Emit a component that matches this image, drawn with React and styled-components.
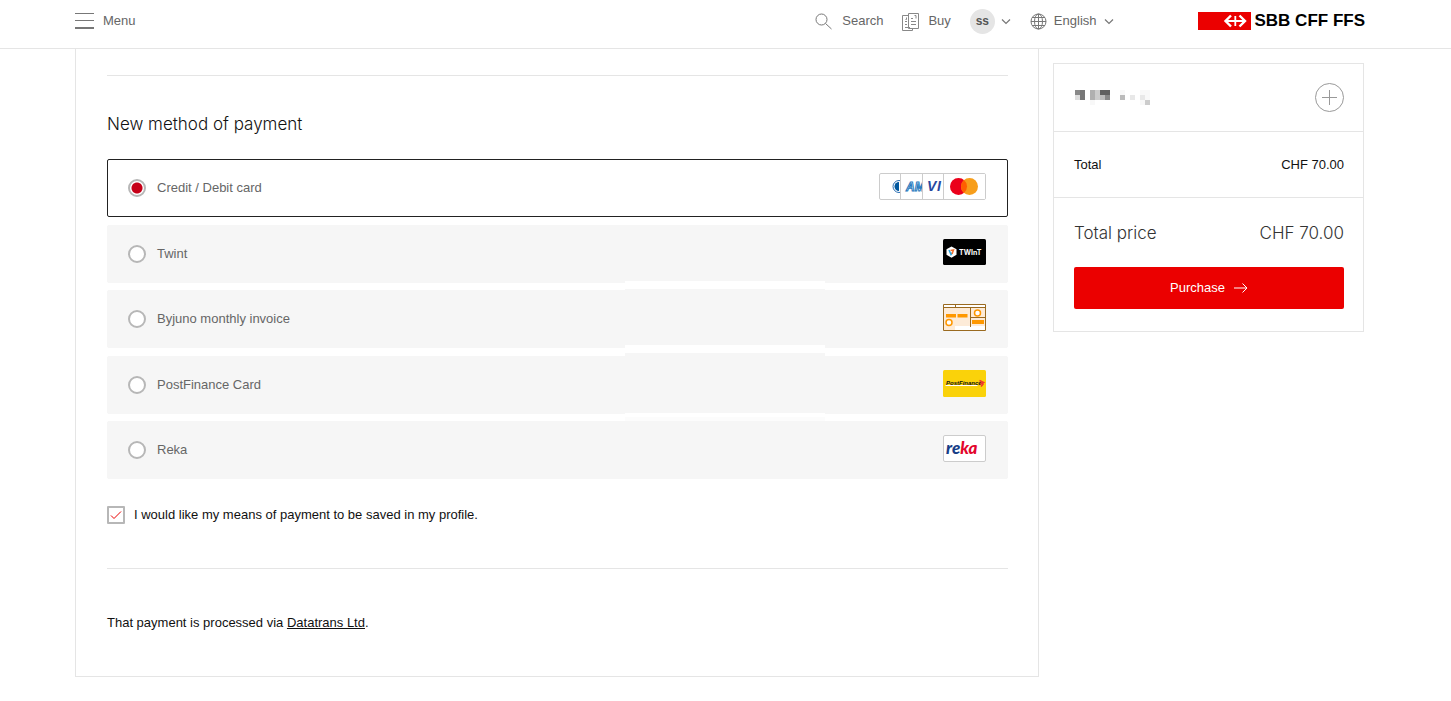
import React, { useState } from 'react';
import styled, { createGlobalStyle } from 'styled-components';

const GlobalStyle = createGlobalStyle`
  * {
    box-sizing: border-box;
  }

  body {
    margin: 0;
    background: #fff;
    color: #111;
    font-family: "Liberation Sans", Arial, sans-serif;
    font-size: 13px;
    line-height: 20px;
  }

  button {
    font: inherit;
    color: inherit;
    border: none;
    background: none;
    padding: 0;
    cursor: pointer;
  }

  svg {
    display: block;
    flex-shrink: 0;
  }
`;

const Header = styled.header`
  display: flex;
  align-items: center;
  justify-content: space-between;
  height: 49px;
  padding: 0 86px 6px 75px;
  border-bottom: 1px solid #e5e5e5;
  color: #666;
`;

const NavButton = styled.button`
  display: flex;
  align-items: center;
  gap: ${props => props.$gap || 9}px;
`;

const HeaderRight = styled.div`
  display: flex;
  align-items: center;
`;

const Nav = styled.nav`
  display: flex;
  align-items: center;
  gap: 19px;
  margin-right: 84px;
`;

const Avatar = styled.span`
  width: 25px;
  height: 25px;
  border-radius: 50%;
  background: #e5e5e5;
  color: #555;
  font-size: 12px;
  font-weight: bold;
  line-height: 25px;
  text-align: center;
`;

const Logo = styled.a`
  display: flex;
  align-items: center;
  gap: 4px;
  color: #000;
  font-size: 17px;
  font-weight: bold;
  text-decoration: none;
  white-space: nowrap;
`;

const Page = styled.div`
  display: flex;
  align-items: flex-start;
  gap: 14px;
  padding: 0 87px 24px 75px;
`;

const Content = styled.main`
  flex: 1;
  min-width: 0;
  padding: 26px 30px 43px 31px;
  border: 1px solid #e5e5e5;
  border-width: 0 1px 1px;
`;

const Divider = styled.hr`
  margin: 0;
  border: 0;
  border-top: 1px solid #e5e5e5;
`;

const Title = styled.h2`
  margin: 36px 0 23px;
  font-family: Inter, "Liberation Sans", sans-serif;
  font-size: 17px;
  font-weight: 300;
  line-height: 24px;
`;

const Methods = styled.div`
  display: flex;
  flex-direction: column;
  justify-content: space-between;
  min-height: 320px;
`;

const Method = styled.label`
  position: relative;
  display: flex;
  align-items: center;
  gap: 11px;
  height: 58px;
  padding: 0 21px 0 20px;
  border: 1px solid ${props => (props.$active ? '#222' : '#f6f6f6')};
  border-radius: 2px;
  background: ${props => (props.$active ? '#fff' : '#f6f6f6')};
  color: #666;
  cursor: pointer;
`;

// white strip lying over the gap under a row
const Strip = styled.span`
  position: absolute;
  z-index: 1;
  top: ${props => props.$top}px;
  left: 57.5%;
  width: 22.3%;
  height: ${props => props.$height}px;
  background: #fff;
  box-shadow: 0 ${props => props.$edge}px ${props => props.$color || '#f6f6f6'};
  pointer-events: none;
`;

const Radio = styled.input`
  appearance: none;
  width: 18px;
  height: 18px;
  margin: 0;
  border: 2px solid #b7b7b7;
  border-radius: 50%;
  background: #fff;

  &:checked {
    background: radial-gradient(circle, #c60018 5px, #fff 6px);
  }
`;

const MethodName = styled.span`
  flex: 1;
`;

const MethodLogo = styled.span`
  padding-bottom: 3px;
`;

const SaveRow = styled.div`
  display: flex;
  align-items: center;
  gap: 9px;
  margin: 26px 0 43px;
`;

const CheckBox = styled.span`
  display: grid;
  width: 18px;
  height: 18px;

  input, svg {
    grid-area: 1 / 1;
  }

  input {
    appearance: none;
    width: 18px;
    height: 18px;
    margin: 0;
    border: 2px solid #b7b7b7;
    border-radius: 1px;
    cursor: pointer;
  }

  svg {
    pointer-events: none;
  }

  input:not(:checked) + svg {
    visibility: hidden;
  }
`;

const Note = styled.p`
  margin: 44px 0 0;

  a {
    color: inherit;
  }
`;

const Summary = styled.aside`
  width: 311px;
  margin-top: 14px;
  border: 1px solid #e5e5e5;
`;

const SummaryRow = styled.div`
  display: flex;
  align-items: center;
  justify-content: space-between;
  height: ${props => props.$height}px;
  padding: 0 19px 0 20px;
  border-bottom: 1px solid #e5e5e5;
`;

const Checkout = styled.div`
  padding: 22px 19px 22px 20px;
`;

const Price = styled.div`
  display: flex;
  justify-content: space-between;
  margin-bottom: 21px;
  color: #333;
  font-family: Inter, "Liberation Sans", sans-serif;
  font-size: 17px;
  font-weight: 300;
  line-height: 26px;
`;

const Purchase = styled.button`
  display: flex;
  align-items: center;
  justify-content: center;
  gap: 9px;
  width: 100%;
  height: 42px;
  border-radius: 2px;
  background: #eb0000;
  color: #fff;
`;

const MenuIcon = () => (
  <svg width="19" height="18" fill="none" stroke="#777">
    <path d="M0 1.5h19M0 8.5h19" />
    <path d="M0 16h19" strokeWidth="2" />
  </svg>
);

const SearchIcon = () => (
  <svg width="18" height="18" fill="none" stroke="#777">
    <circle cx="6.5" cy="7.5" r="5.5" />
    <path d="M10.5 11.5l6 5.5" />
  </svg>
);

const BuyIcon = () => (
  <svg width="17" height="19" fill="none" stroke="#888">
    <path d="M6.5 3.5h-6v15h10v-2M6.5 1.5h10v15h-10z" />
    <path d="M9 6.5h2M12.5 3.5H14v3M9 9.5h5M9 12.5h5M3 9.5h2M3 12.5h2M3 15.5h5M4.5 5.5v2h-1" />
  </svg>
);

const GlobeIcon = () => (
  <svg width="17" height="17" fill="none" stroke="#777">
    <circle cx="8.5" cy="8.5" r="7.5" />
    <ellipse cx="8.5" cy="8.5" rx="4" ry="7.5" />
    <path d="M8.5 1v15M1 8.5h15M2 4.5h13M2 12.5h13" />
  </svg>
);

const ChevronIcon = () => (
  <svg width="10" height="7" fill="none" stroke="#777" strokeWidth="1.2">
    <path d="M1 1.5l4 4 4-4" />
  </svg>
);

const LogoIcon = () => (
  <svg width="53" height="18" viewBox="0 0 53 18">
    <path fill="#eb0000" d="M0 0h53v18H0z" />
    <path
      d="M33 3.500L27.500 9l5.500 5.500M41.500 3.500L47 9l-5.500 5.500"
      fill="none"
      stroke="#fff"
      strokeWidth="2.4"
    />
    <path d="M28 9h18.500M37.300 4v10" fill="none" stroke="#fff" strokeWidth="1.8" />
  </svg>
);

const PlusIcon = () => (
  <svg width="29" height="29" fill="none" stroke="#999">
    <circle cx="14.5" cy="14.5" r="14" />
    <path d="M14.5 7v15M7 14.5h15" />
  </svg>
);

const ArrowIcon = () => (
  <svg width="14" height="12" fill="none" stroke="#fff">
    <path d="M0 6h13M8.5 1.5L13 6l-4.5 4.5" />
  </svg>
);

// name of the traveller, anonymised
const HiddenName = () => (
  <svg width="77" height="17" viewBox="-1 0 77 17" shapeRendering="crispEdges">
    <path fill="#888" d="M0 1h5v5H0z" />
    <path fill="#777" d="M5 1h5v10H5z" />
    <path fill="#ddd" d="M0 6h5v5H0z" />
    <path fill="#b0b0b0" d="M15 1h5v10h-5z" />
    <path fill="#ccc" d="M20 1h5v10h-5z" />
    <path fill="#606060" d="M25 1h10v5H25z" />
    <path fill="#bbb" d="M25 6h5v5h-5z" />
    <path fill="#888" d="M30 6h5v5h-5z" />
    <path fill="#bbb" d="M45 6h5v5h-5z" />
    <path fill="#e8e8e8" d="M55 6h5v5h-5zM65 6h5v5h-5z" />
    <path fill="#f8f8f8" d="M15 11h5v5h-5zM45 1h5v5h-5zM65 1h10v5H65zM70 6h5v5h-5zM65 11h5v5h-5z" />
    <path fill="#ccc" d="M70 11h5v5h-5z" />
  </svg>
);

const CardLogos = () => (
  <svg width="107" height="27" fontFamily="Liberation Sans, sans-serif" fontWeight="bold">
    <rect x=".5" y=".5" width="106" height="26" rx="1.5" fill="#fff" stroke="#ccc" />
    <circle cx="20" cy="13.5" r="6" fill="#fff" stroke="#2a6eb3" />
    <path d="M20 9a4.5 4.500 0 0 0 0 9z" fill="#00579f" />
    <path d="M21.5 1h84v25h-84z" fill="#fff" />
    <path d="M21.5 1v25" stroke="#ccc" />
    <text x="27" y="18" fontSize="12" fontStyle="italic" fill="#fff" stroke="#2478bd">AM</text>
    <path d="M43.5 1h62v25h-62z" fill="#fff" />
    <path d="M43.5 1v25" stroke="#ccc" />
    <text x="48" y="18" fontSize="14" fontStyle="italic" fill="#2747a0">V</text>
    <text x="58" y="18" fontSize="14" fontStyle="italic" fill="#2747a0">I</text>
    <path d="M64.5 1h41v25h-41z" fill="#fff" />
    <path d="M64.5 1v25" stroke="#ccc" />
    <circle cx="79.5" cy="13.5" r="8.5" fill="#eb001b" />
    <circle cx="90.5" cy="13.5" r="8.5" fill="#f79e1b" />
    <path d="M85 7a8.5 8.5 0 0 1 0 13a8.5 8.5 0 0 1 0-13z" fill="#ff5f00" />
  </svg>
);

const TwintLogo = () => (
  <svg width="43" height="27">
    <rect width="43" height="26" rx="1.5" fill="#000" />
    <path d="M8.5 7.5l5 2.800v5.500l-5 3-5-3v-5.500z" fill="#fff" />
    <path d="M6 11l2 4.5 1.500-2" fill="none" stroke="#2ba6df" strokeWidth="1.5" />
    <path d="M7.5 11.5l3-.5-1.500 4" fill="none" stroke="#f36f2b" strokeWidth="1.5" />
    <text x="16" y="16" fontFamily="Inter, sans-serif" fontSize="7" fontWeight="700" fill="#fff">TWInT</text>
  </svg>
);

const InvoiceLogo = () => (
  <svg width="43" height="27">
    <path d="M.5.5h42v26H.5z" fill="#fdebd8" stroke="#9a6a20" />
    <path d="M1 1h41v2.500H1zM12 22h30v4H12z" fill="#fff" />
    <path d="M0 3.500h43M27.500 4v19M28 13.500h15M12.500 0v4" stroke="#9a6a20" fill="none" />
    <path d="M3 10h10v3.500H3zM14.500 10h10v3.500h-10zM29 16h12v4H29z" fill="#ff9800" />
    <circle cx="34.5" cy="9" r="3" fill="#fff" stroke="#ff9800" strokeWidth="1.5" />
    <circle cx="6" cy="18.5" r="3" fill="#fff" stroke="#ff9800" strokeWidth="1.5" />
  </svg>
);

const PostFinanceLogo = () => (
  <svg width="43" height="27">
    <rect width="43" height="27" rx="1.5" fill="#fad20a" />
    <path d="M2.5 15.5h32" stroke="#fff" />
    <text x="3" y="15" fontFamily="Liberation Sans, sans-serif" fontSize="6" fontStyle="italic" fontWeight="bold" fill="#111">
      PostFinance
    </text>
    <path d="M36.5 10.5l4 2-3.500 1.500M38 16.500l2.500-3" fill="none" stroke="#f0372d" strokeWidth="1.5" />
  </svg>
);

const RekaLogo = () => (
  <svg width="43" height="27">
    <rect x=".5" y=".5" width="42" height="26" rx="1.5" fill="#fff" stroke="#ccc" />
    <text x="3" y="19" fontFamily="Lato, sans-serif" fontSize="17" fontStyle="italic" fontWeight="900" fill="#173e87">
      re<tspan fill="#e3062c">ka</tspan>
    </text>
  </svg>
);

const methods = [
  { id: 'card', name: 'Credit / Debit card', logo: <CardLogos /> },
  { id: 'twint', name: 'Twint', logo: <TwintLogo />, strip: <Strip $top={55} $height={8} $edge={1} /> },
  { id: 'byjuno', name: 'Byjuno monthly invoice', logo: <InvoiceLogo />, strip: <Strip $top={54} $height={8} $edge={3} /> },
  { id: 'postfinance', name: 'PostFinance Card', logo: <PostFinanceLogo />, strip: <Strip $top={56} $height={4} $edge={4} $color="#fcfcfc" /> },
  { id: 'reka', name: 'Reka', logo: <RekaLogo /> },
];

function App() {
  const [method, setMethod] = useState('card');
  const [save, setSave] = useState(true);

  return (
    <>
      <GlobalStyle />
      <Header>
        <NavButton><MenuIcon />Menu</NavButton>
        <HeaderRight>
          <Nav>
            <NavButton><SearchIcon />Search</NavButton>
            <NavButton><BuyIcon />Buy</NavButton>
            <NavButton $gap={6}><Avatar>ss</Avatar><ChevronIcon /></NavButton>
            <NavButton $gap={7}><GlobeIcon />English<ChevronIcon /></NavButton>
          </Nav>
          <Logo href="#"><LogoIcon />SBB CFF FFS</Logo>
        </HeaderRight>
      </Header>
      <Page>
        <Content>
          <Divider />
          <Title>New method of payment</Title>
          <Methods role="radiogroup">
            {methods.map(item => (
              <Method key={item.id} $active={method === item.id}>
                <Radio
                  type="radio"
                  name="method"
                  value={item.id}
                  checked={method === item.id}
                  onChange={() => setMethod(item.id)}
                />
                <MethodName>{item.name}</MethodName>
                <MethodLogo>{item.logo}</MethodLogo>
                {item.strip}
              </Method>
            ))}
          </Methods>
          <SaveRow>
            <CheckBox>
              <input id="save" type="checkbox" checked={save} onChange={() => setSave(!save)} />
              <svg width="18" height="18" fill="none" stroke="#eb0000">
                <path d="M4 9.5l3 3 7-7" />
              </svg>
            </CheckBox>
            <label htmlFor="save">I would like my means of payment to be saved in my profile.</label>
          </SaveRow>
          <Divider />
          <Note>That payment is processed via <a href="#">Datatrans Ltd</a>.</Note>
        </Content>
        <Summary>
          <SummaryRow $height={68}>
            <HiddenName />
            <button aria-label="Show details"><PlusIcon /></button>
          </SummaryRow>
          <SummaryRow $height={66}>
            <span>Total</span>
            <span>CHF 70.00</span>
          </SummaryRow>
          <Checkout>
            <Price>
              <span>Total price</span>
              <span>CHF 70.00</span>
            </Price>
            <Purchase>Purchase<ArrowIcon /></Purchase>
          </Checkout>
        </Summary>
      </Page>
    </>
  );
}

export default App;
